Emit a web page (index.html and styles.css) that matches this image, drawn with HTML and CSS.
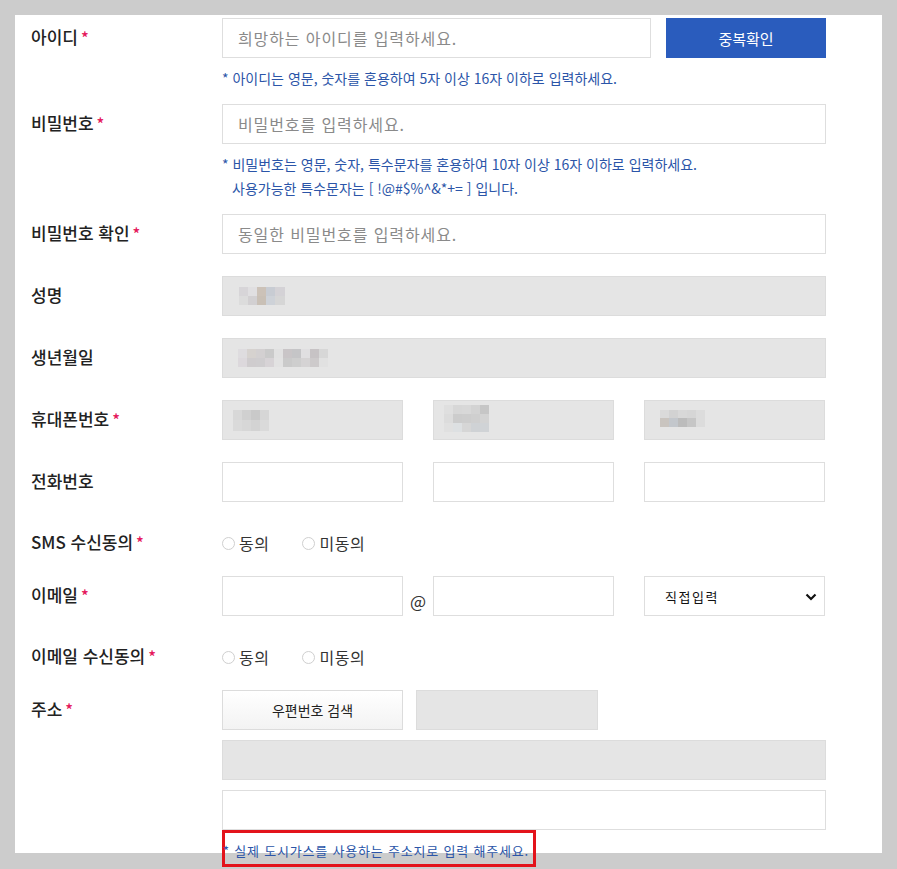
FILE: index.html
```html
<!DOCTYPE html>
<html lang="ko">
<head>
<meta charset="utf-8">
<title>회원가입</title>
<link rel="stylesheet" href="styles.css">
</head>
<body>
<div class="panel">
  <div class="row has-note">
    <div class="label">아이디<span class="req">*</span></div>
    <div class="field">
      <div class="inline">
        <div class="input w-main"><span class="ph">희망하는 아이디를 입력하세요.</span></div>
        <div class="btn-blue">중복확인</div>
      </div>
      <p class="note">* 아이디는 영문, 숫자를 혼용하여 5자 이상 16자 이하로 입력하세요.</p>
    </div>
  </div>

  <div class="row has-note">
    <div class="label">비밀번호<span class="req">*</span></div>
    <div class="field">
      <div class="input"><span class="ph">비밀번호를 입력하세요.</span></div>
      <p class="note">* 비밀번호는 영문, 숫자, 특수문자를 혼용하여 10자 이상 16자 이하로 입력하세요.<br><span class="indent">사용가능한 특수문자는 [ !@#$%^&amp;*+= ] 입니다.</span></p>
    </div>
  </div>

  <div class="row">
    <div class="label">비밀번호 확인<span class="req">*</span></div>
    <div class="field">
      <div class="input"><span class="ph">동일한 비밀번호를 입력하세요.</span></div>
    </div>
  </div>

  <div class="row">
    <div class="label">성명</div>
    <div class="field">
      <div class="input gray"><span class="mosaic m-name"></span></div>
    </div>
  </div>

  <div class="row">
    <div class="label">생년월일</div>
    <div class="field">
      <div class="input gray"><span class="mosaic m-birth"></span></div>
    </div>
  </div>

  <div class="row">
    <div class="label">휴대폰번호<span class="req">*</span></div>
    <div class="field trio">
      <div class="input gray small"><span class="mosaic m-p1"></span></div>
      <div class="input gray small"><span class="mosaic m-p2"></span></div>
      <div class="input gray small"><span class="mosaic m-p3"></span></div>
    </div>
  </div>

  <div class="row">
    <div class="label">전화번호</div>
    <div class="field trio">
      <div class="input"></div>
      <div class="input"></div>
      <div class="input"></div>
    </div>
  </div>

  <div class="row radio-row">
    <div class="label">SMS 수신동의<span class="req">*</span></div>
    <div class="field radios">
      <label class="radio"><span class="circle"></span>동의</label>
      <label class="radio"><span class="circle"></span>미동의</label>
    </div>
  </div>

  <div class="row">
    <div class="label">이메일<span class="req">*</span></div>
    <div class="field email">
      <div class="input"></div>
      <span class="at">@</span>
      <div class="input"></div>
      <div class="select">
        <span class="sel-text">직접입력</span>
        <svg class="chev" width="12" height="8" viewBox="0 0 12 8"><path d="M1.5 1.5 L6 6 L10.5 1.5" fill="none" stroke="#111" stroke-width="2.2"/></svg>
      </div>
    </div>
  </div>

  <div class="row radio-row">
    <div class="label">이메일 수신동의<span class="req">*</span></div>
    <div class="field radios">
      <label class="radio"><span class="circle"></span>동의</label>
      <label class="radio"><span class="circle"></span>미동의</label>
    </div>
  </div>

  <div class="row last">
    <div class="label">주소<span class="req">*</span></div>
    <div class="field addr">
      <div class="addr-top">
        <div class="btn-zip">우편번호 검색</div>
        <div class="input gray zip"></div>
      </div>
      <div class="input gray"></div>
      <div class="input"></div>
      <p class="addr-note">* 실제 도시가스를 사용하는 주소지로 입력 해주세요.</p>
    </div>
  </div>
</div>
</body>
</html>
```

FILE: styles.css
```css
* { box-sizing: border-box; }

html, body {
  margin: 0;
  padding: 0;
  background: #cccccc;
  height: 869px;
  overflow: hidden;
}

body {
  font-family: "Noto Sans CJK KR", "Noto Sans", sans-serif;
  color: #222;
}

.panel {
  margin: 15px 15px 0 15px;
  width: 867px;
  height: 838px;
  background: #fff;
  padding: 3px 0 0 16px;
}

.row {
  display: grid;
  grid-template-columns: 191px 604px;
  padding-bottom: 22px;
}

.row.has-note { padding-bottom: 14px; }

.row.radio-row {
  margin-top: -1px;
  padding-bottom: 13px;
}

.label {
  height: 40px;
  line-height: 38px;
  font-size: 17px;
  font-weight: 500;
  color: #222;
  white-space: nowrap;
}

.req {
  color: #e5185c;
  margin-left: 3px;
  font-size: 16px;
}

.field { min-width: 0; }

.inline {
  display: flex;
  gap: 15px;
}

.input {
  height: 40px;
  border: 1px solid #dedede;
  background: #fff;
  padding: 0 15px;
  display: flex;
  align-items: center;
}

.input.w-main { width: 429px; }

.ph {
  font-size: 16px;
  letter-spacing: 0.9px;
  color: #8a8a8a;
  white-space: nowrap;
}

.btn-blue {
  width: 160px;
  height: 40px;
  background: #2a5cbd;
  color: #fff;
  font-size: 15px;
  display: flex;
  align-items: center;
  justify-content: center;
}

.note {
  margin: 8px 0 0 0;
  font-size: 14px;
  line-height: 24px;
  color: #2b55a8;
  white-space: nowrap;
}

.indent { padding-left: 10px; }

.gray {
  background: #e5e5e5;
  border-color: #dcdcdc;
}

.trio {
  display: grid;
  grid-template-columns: 181px 181px 181px;
  column-gap: 30px;
}

.email {
  display: grid;
  grid-template-columns: 181px 30px 181px 211px;
  height: 40px;
}

.email .select { margin-left: 30px; }

.at {
  font-size: 17px;
  color: #333;
  height: 40px;
  display: flex;
  align-items: flex-end;
  justify-content: center;
  padding-bottom: 3px;
}

.select {
  height: 40px;
  border: 1px solid #dedede;
  background: #fff;
  display: flex;
  align-items: center;
  justify-content: space-between;
  padding: 0 7px 0 20px;
}

.sel-text {
  font-size: 13px;
  letter-spacing: 1.5px;
  color: #111;
}

.chev { display: block; margin-top: 2px; }

.radios {
  display: flex;
  align-items: center;
  height: 40px;
  gap: 33px;
}

.radio {
  display: flex;
  align-items: center;
  font-size: 16px;
  letter-spacing: 0.5px;
  color: #333;
}

.circle {
  width: 13px;
  height: 13px;
  border: 1px solid #cfcfcf;
  border-radius: 50%;
  background: #fff;
  margin-right: 4px;
}

.addr {
  display: flex;
  flex-direction: column;
  gap: 10px;
}

.addr-top {
  display: flex;
  gap: 13px;
}

.btn-zip {
  width: 181px;
  height: 40px;
  border: 1px solid #dcdcdc;
  background: linear-gradient(#ffffff, #f3f3f3);
  display: flex;
  align-items: center;
  justify-content: center;
  font-size: 14px;
  color: #222;
}

.input.zip { width: 182px; }

.addr-note {
  margin: -10px 0 0 0;
  align-self: flex-start;
  width: 314px;
  border: 3px solid #e3131b;
  font-size: 13px;
  letter-spacing: 0.8px;
  line-height: 20px;
  color: #2b55a8;
  padding: 8px 0 3px 0;
  white-space: nowrap;
  text-indent: -2px;
  overflow: visible;
}

.mosaic {
  display: block;
  height: 18px;
}

.m-name {
  width: 46px;
  margin-left: 1px;
  background:
    linear-gradient(90deg, #d7d5d8 0 9px, #e0dfe1 9px 18px, #ccc2b8 18px 27px, #c8ccd3 27px 36px, #d4d2d6 36px 46px) top / 100% 9px no-repeat,
    linear-gradient(90deg, #dcdcdc 0 9px, #d2d0d2 9px 18px, #c9c0b6 18px 27px, #ced2d8 27px 36px, #d6d6d6 36px 46px) bottom / 100% 9px no-repeat;
}

.m-birth {
  width: 90px;
  background:
    linear-gradient(90deg, #dedcdf 0 9px, #d6d2cf 9px 18px, #d3d0d1 18px 27px, #cacaca 27px 36px, #e1e1e1 36px 45px, #c9c5c7 45px 54px, #c5c5c7 54px 63px, #e0dfe1 63px 72px, #c7c3c5 72px 81px, #d7d7d7 81px 90px) top / 100% 9px no-repeat,
    linear-gradient(90deg, #dcd8dc 0 9px, #cfccce 9px 18px, #cfcdcf 18px 27px, #d7d3d6 27px 36px, #e2e2e2 36px 45px, #cacaca 45px 54px, #cecece 54px 63px, #d5d3d4 63px 72px, #cdcacb 72px 81px, #e1e1e1 81px 90px) bottom / 100% 9px no-repeat;
}

.m-p1 {
  width: 36px;
  height: 21px;
  margin-left: -5px;
  background:
    linear-gradient(90deg, #d8d8d8 0 9px, #d0d0d0 9px 18px, #c9c9c9 18px 27px, #d6d6d6 27px 36px) top / 100% 10px no-repeat,
    linear-gradient(90deg, #dadada 0 9px, #d7d7d7 9px 18px, #d3d3d3 18px 27px, #dadada 27px 36px) bottom / 100% 11px no-repeat;
}

.m-p2 {
  width: 45px;
  height: 27px;
  margin-left: -5px;
  margin-top: -4px;
  background:
    linear-gradient(90deg, #dfdfdf 0 9px, #d7d7d7 9px 18px, #d8d8d8 18px 27px, #d3d3d3 27px 36px, #c6c6c6 36px 45px) top / 100% 9px no-repeat,
    linear-gradient(90deg, #dcdcdc 0 9px, #cccccc 9px 18px, #cdcdcd 18px 27px, #cfcfcf 27px 36px, #d3d3d3 36px 45px) center / 100% 9px no-repeat,
    linear-gradient(90deg, #e0e0e0 0 9px, #dde0e2 9px 18px, #d6d6d6 18px 27px, #cfd2d5 27px 36px, #d0d3d6 36px 45px) bottom / 100% 9px no-repeat;
}

.m-p3 {
  width: 45px;
  height: 17px;
  margin-top: -4px;
  background:
    linear-gradient(90deg, #dadada 0 9px, #d2d2d2 9px 18px, #d8d8d8 18px 27px, #d6d6d6 27px 36px, #dcdcdc 36px 45px) top / 100% 8px no-repeat,
    linear-gradient(90deg, #c9c4bf 0 9px, #c3c7cc 9px 18px, #bcbcbc 18px 27px, #c6c6c6 27px 36px, #dcdcdc 36px 45px) bottom / 100% 9px no-repeat;
}
```
